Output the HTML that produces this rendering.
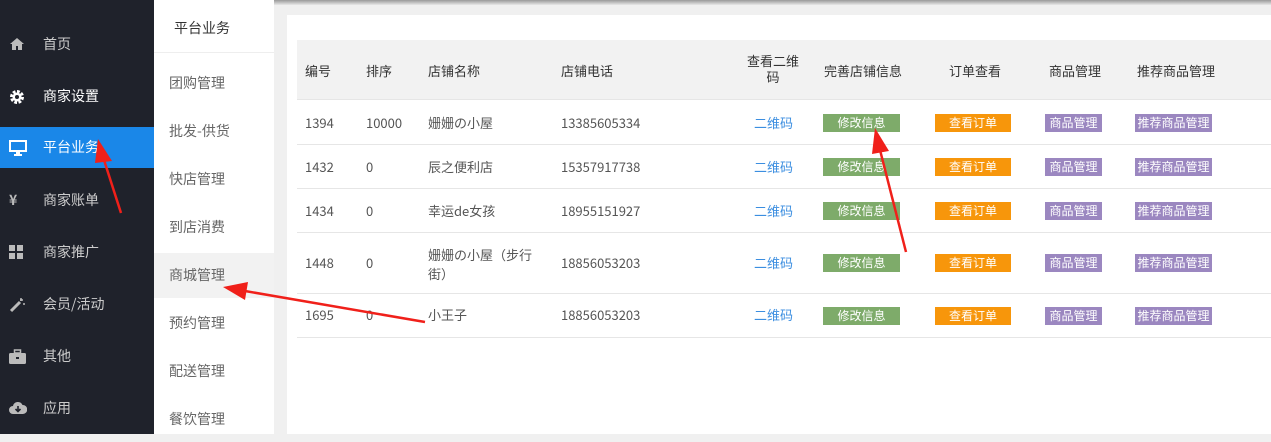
<!DOCTYPE html>
<html><head><meta charset="utf-8"><style>
*{margin:0;padding:0;box-sizing:border-box}
body{width:1271px;height:434px;overflow:hidden;background:#f0f0f0;font-family:"Noto Sans CJK SC","Liberation Sans",sans-serif;font-size:13px;color:#555;position:relative}
.a{position:absolute;white-space:nowrap;line-height:18px}
.side{position:absolute;left:0;top:0;width:154px;height:434px;background:#1f222b}
.mi{position:absolute;left:0;width:154px;height:41px;color:#ccc;font-size:14px}
.mi span{position:absolute;left:43px;top:10px;line-height:20px}
.mi svg{position:absolute;left:9px;top:13px}
.sub{position:absolute;left:154px;top:0;width:120px;height:434px;background:#fff}
.si{position:absolute;left:0;width:120px;height:45px;color:#666;font-size:14px}
.si span{position:absolute;left:15px;top:12px;line-height:20px}
.card{position:absolute;left:287px;top:15px;width:984px;height:419px;background:#fff}
.th{position:absolute;left:297px;top:40px;width:974px;height:60px;background:#f2f2f2;border-bottom:1px solid #e6e6e6}
.hl{position:absolute;left:297px;width:974px;height:1px;background:#e6e6e6}
.h{color:#333;font-size:13px}
.btn{position:absolute;height:18px;color:#fff;font-size:12px;text-align:center;line-height:18px}
.g{background:#7eab6a;width:77px;left:823px}
.o{background:#f7960b;width:76px;left:935px}
.p{background:#9b87c0;width:57px;left:1045px}
.p2{background:#9b87c0;width:77px;left:1135px}
.q{color:#3b8ee0}
</style></head><body>
<div class="a" style="left:0;top:0;width:1271px;height:5px;background:linear-gradient(#999,#e8e8e8)"></div>
<div class="side">
 <div class="mi" style="top:24px"><svg width="16" height="14" viewBox="0 0 16 14"><path d="M8 1L1 7h2v6h4V9h2v4h4V7h2z" fill="#bbb"/></svg><span>首页</span></div>
 <div class="mi" style="top:76px;color:#fff"><svg width="16" height="16" viewBox="0 0 16 16"><circle cx="8" cy="8" r="5" fill="none" stroke="#fff" stroke-width="4" stroke-dasharray="2.5 1.4"/><circle cx="8" cy="8" r="4.5" fill="#fff"/><circle cx="8" cy="8" r="2" fill="#1f222b"/></svg><span>商家设置</span></div>
 <div class="mi" style="top:127px;background:#1a87e8;color:#fff"><svg width="18" height="16" viewBox="0 0 18 16"><rect x="1" y="1" width="16" height="10" fill="none" stroke="#fff" stroke-width="2"/><rect x="7" y="11" width="4" height="3" fill="#fff"/><rect x="5" y="14" width="8" height="2" fill="#fff"/></svg><span>平台业务</span></div>
 <div class="mi" style="top:180px"><span style="left:9px;color:#bbb;font-weight:bold">¥</span><span>商家账单</span></div>
 <div class="mi" style="top:232px"><svg width="14" height="14" viewBox="0 0 14 14" fill="#bbb"><rect x="0" y="0" width="6" height="6"/><rect x="8" y="0" width="6" height="6"/><rect x="0" y="8" width="6" height="6"/><rect x="8" y="8" width="6" height="6"/></svg><span>商家推广</span></div>
 <div class="mi" style="top:284px"><svg width="16" height="16" viewBox="0 0 16 16"><path d="M2 14L11 5" stroke="#bbb" stroke-width="3"/><path d="M12 1v3M14 3h-3M14 7h2" stroke="#bbb" stroke-width="1.5"/></svg><span>会员/活动</span></div>
 <div class="mi" style="top:336px"><svg width="17" height="15" viewBox="0 0 17 15"><rect x="5.5" y="1" width="6" height="3" fill="none" stroke="#bbb" stroke-width="1.5"/><rect x="0" y="4" width="17" height="11" rx="1.5" fill="#bbb"/><rect x="7" y="8" width="3" height="2" fill="#1f222b"/></svg><span>其他</span></div>
 <div class="mi" style="top:388px"><svg width="18" height="14" viewBox="0 0 18 14"><path d="M4 13a4 4 0 010-8 5 5 0 019.5-1A4.5 4.5 0 0114 13z" fill="#bbb"/><path d="M9 5v5M6.5 8l2.5 2.5L11.5 8" stroke="#1f222b" stroke-width="1.6" fill="none"/></svg><span>应用</span></div>
</div>
<div class="sub">
 <div class="a" style="left:20px;top:18px;color:#333;font-size:14px;line-height:20px">平台业务</div>
 <div class="a" style="left:0;top:52px;width:120px;height:1px;background:#eee"></div>
 <div class="si" style="top:61px"><span>团购管理</span></div>
 <div class="si" style="top:109px"><span>批发-供货</span></div>
 <div class="si" style="top:157px"><span>快店管理</span></div>
 <div class="si" style="top:205px"><span>到店消费</span></div>
 <div class="si" style="top:253px;background:#f2f2f2"><span>商城管理</span></div>
 <div class="si" style="top:301px"><span>预约管理</span></div>
 <div class="si" style="top:349px"><span>配送管理</span></div>
 <div class="si" style="top:397px"><span>餐饮管理</span></div>
</div>
<div class="card"></div>
<div class="th"></div>
<div class="a h" style="left:305px;top:62px">编号</div>
<div class="a h" style="left:366px;top:62px">排序</div>
<div class="a h" style="left:428px;top:62px">店铺名称</div>
<div class="a h" style="left:561px;top:62px">店铺电话</div>
<div class="a h" style="left:746px;top:53px;width:54px;text-align:center;white-space:normal;line-height:16px">查看二维码</div>
<div class="a h" style="left:824px;top:62px">完善店铺信息</div>
<div class="a h" style="left:949px;top:62px">订单查看</div>
<div class="a h" style="left:1049px;top:62px">商品管理</div>
<div class="a h" style="left:1137px;top:62px">推荐商品管理</div>

<div class="hl" style="top:144px"></div><div class="hl" style="top:188px"></div><div class="hl" style="top:232px"></div><div class="hl" style="top:293px"></div><div class="hl" style="top:337px"></div>

<div class="a" style="left:305px;top:114px">1394</div><div class="a" style="left:366px;top:114px">10000</div><div class="a" style="left:428px;top:114px">姗姗の小屋</div><div class="a" style="left:561px;top:114px">13385605334</div><div class="a q" style="left:754px;top:114px">二维码</div>
<div class="btn g" style="top:114px">修改信息</div><div class="btn o" style="top:114px">查看订单</div><div class="btn p" style="top:114px">商品管理</div><div class="btn p2" style="top:114px">推荐商品管理</div>

<div class="a" style="left:305px;top:158px">1432</div><div class="a" style="left:366px;top:158px">0</div><div class="a" style="left:428px;top:158px">辰之便利店</div><div class="a" style="left:561px;top:158px">15357917738</div><div class="a q" style="left:754px;top:158px">二维码</div>
<div class="btn g" style="top:158px">修改信息</div><div class="btn o" style="top:158px">查看订单</div><div class="btn p" style="top:158px">商品管理</div><div class="btn p2" style="top:158px">推荐商品管理</div>

<div class="a" style="left:305px;top:202px">1434</div><div class="a" style="left:366px;top:202px">0</div><div class="a" style="left:428px;top:202px">幸运de女孩</div><div class="a" style="left:561px;top:202px">18955151927</div><div class="a q" style="left:754px;top:202px">二维码</div>
<div class="btn g" style="top:202px">修改信息</div><div class="btn o" style="top:202px">查看订单</div><div class="btn p" style="top:202px">商品管理</div><div class="btn p2" style="top:202px">推荐商品管理</div>

<div class="a" style="left:305px;top:254px">1448</div><div class="a" style="left:366px;top:254px">0</div><div class="a" style="left:428px;top:245px;line-height:19px">姗姗の小屋（步行<br>街）</div><div class="a" style="left:561px;top:254px">18856053203</div><div class="a q" style="left:754px;top:254px">二维码</div>
<div class="btn g" style="top:254px">修改信息</div><div class="btn o" style="top:254px">查看订单</div><div class="btn p" style="top:254px">商品管理</div><div class="btn p2" style="top:254px">推荐商品管理</div>

<div class="a" style="left:305px;top:306px">1695</div><div class="a" style="left:366px;top:306px">0</div><div class="a" style="left:428px;top:306px">小王子</div><div class="a" style="left:561px;top:306px">18856053203</div><div class="a q" style="left:754px;top:306px">二维码</div>
<div class="btn g" style="top:307px">修改信息</div><div class="btn o" style="top:307px">查看订单</div><div class="btn p" style="top:307px">商品管理</div><div class="btn p2" style="top:307px">推荐商品管理</div>

<svg class="a" style="left:0;top:0" width="1271" height="434">
<g fill="#f0201a" stroke="#f0201a">
<line x1="121" y1="213" x2="104" y2="160" stroke-width="2.5"/>
<polygon points="98,139 112,161 95,163" stroke="none"/>
<line x1="425" y1="322" x2="245" y2="291" stroke-width="2.5"/>
<polygon points="223,287 248,282 245,300" stroke="none"/>
<line x1="906" y1="252" x2="880" y2="150" stroke-width="2.5"/>
<polygon points="875,128 889,151 872,154" stroke="none"/>
</g></svg>
</body></html>
